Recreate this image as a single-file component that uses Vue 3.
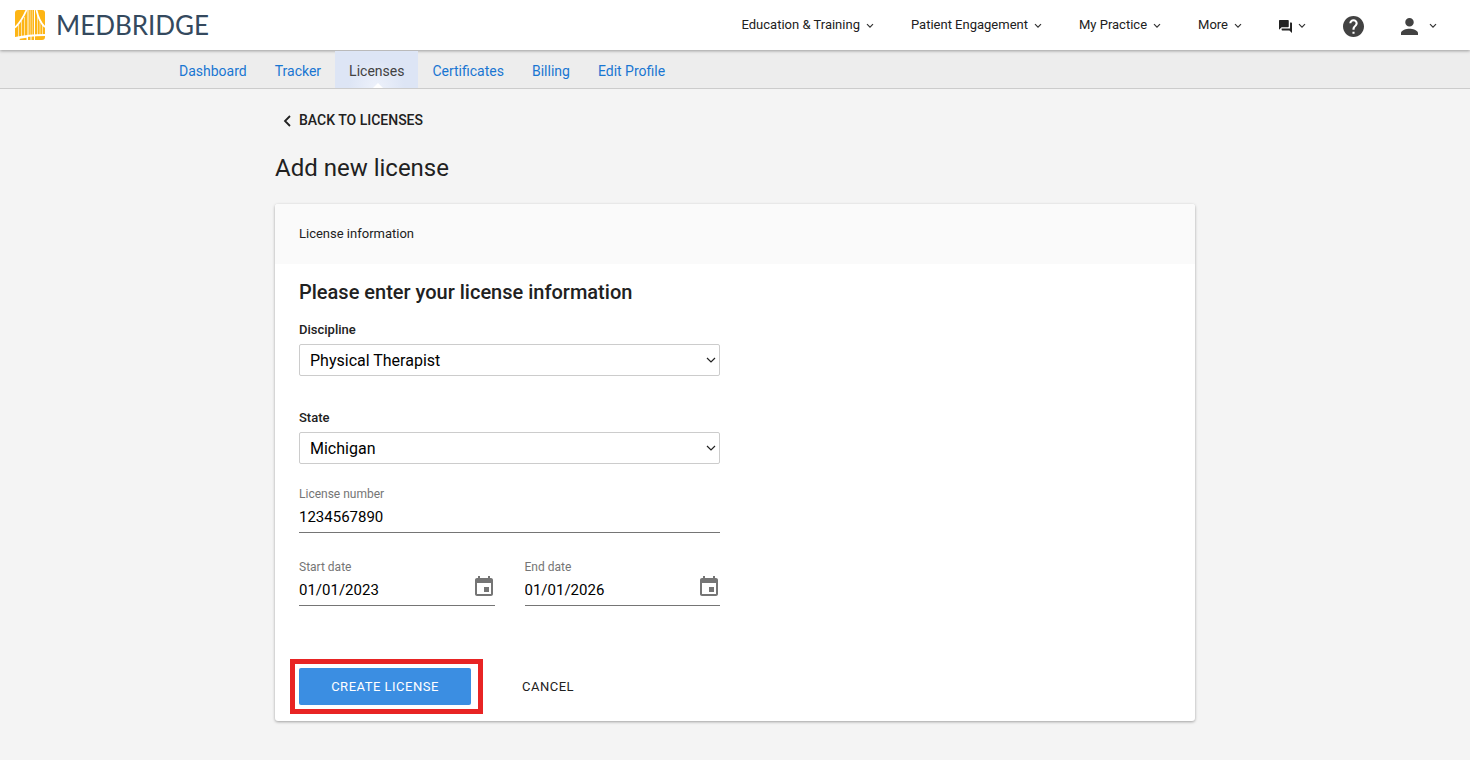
<script setup>
import { ref } from 'vue'

const menus = ['Education & Training', 'Patient Engagement', 'My Practice', 'More']
const tabs = ['Dashboard', 'Tracker', 'Licenses', 'Certificates', 'Billing', 'Edit Profile']
const activeTab = ref('Licenses')
const discipline = ref('Physical Therapist')
const state = ref('Michigan')
const licenseNumber = ref('1234567890')
const dates = ref([
  { id: 'start-date', label: 'Start date', value: '01/01/2023' },
  { id: 'end-date', label: 'End date', value: '01/01/2026' },
])
</script>

<template>
  <div class="page">
    <header class="topbar">
      <a class="brand" href="#" aria-label="Medbridge home">
        <svg class="brand-mark" viewBox="0 0 30 30" aria-hidden="true">
          <rect width="30" height="30" rx="3" fill="#fdb515" />
          <g fill="none" stroke="#fff">
            <path d="M0 17.500C5 13 8 8 11.500 0" stroke-width="1.800" />
            <path d="M21.500 0C23 7 25.500 13 30 17" stroke-width="1.800" />
            <path d="M13 0V26M19.500 0V25" stroke-width="1" />
            <path d="M15.200 0V26M17.300 0V26" stroke-width=".5" />
            <path d="M3.500 15V27M6.500 11V27M9.500 7V26M22.500 5V25M25 12V25M27.500 15V25" stroke-width=".6" />
            <path d="M0 28C9 26 19 25 30 25" stroke-width="1.800" />
            <path d="M16 26V30M19.500 26V30" stroke-width="1" />
          </g>
          <path d="M0 30V28L13 26.300V30Z" fill="#fff" />
          <path d="M4.500 30L5 28.800L11.500 27.800V30Z" fill="#fdb515" />
        </svg>
        <span class="brand-name">MEDBRIDGE</span>
      </a>
      <nav class="menus" aria-label="Main">
        <button v-for="m in menus" :key="m" class="menu" type="button">
          {{ m }}
          <svg class="caret" viewBox="0 0 8 6" aria-hidden="true"><path d="M1 1.200L4 4.200L7 1.200" /></svg>
        </button>
        <button class="menu" type="button" aria-label="Messages">
          <svg class="chat" viewBox="2 2 20 20" aria-hidden="true"><path d="M21 6h-2v9H6v2c0 .55.45 1 1 1h11l4 4V7c0-.55-.45-1-1-1zm-4 6V3c0-.55-.45-1-1-1H3c-.55 0-1 .45-1 1v14l4-4h10c.55 0 1-.45 1-1z" /></svg>
          <svg class="caret" viewBox="0 0 8 6" aria-hidden="true"><path d="M1 1.200L4 4.200L7 1.200" /></svg>
        </button>
        <button class="menu" type="button" aria-label="Help">
          <svg class="help" viewBox="2 2 20 20" aria-hidden="true"><path d="M12 2C6.480 2 2 6.480 2 12s4.480 10 10 10 10-4.480 10-10S17.520 2 12 2zm1 17h-2v-2h2v2zm2.070-7.750l-.9.920C13.450 12.900 13 13.500 13 15h-2v-.5c0-1.100.45-2.100 1.170-2.830l1.240-1.260c.37-.36.59-.86.59-1.410 0-1.100-.9-2-2-2s-2 .9-2 2H8c0-2.210 1.790-4 4-4s4 1.790 4 4c0 .88-.36 1.680-.93 2.250z" /></svg>
        </button>
        <button class="menu account" type="button" aria-label="Account">
          <svg class="person" viewBox="4 4 16 16" aria-hidden="true"><path d="M12 12c2.210 0 4-1.790 4-4s-1.790-4-4-4-4 1.790-4 4 1.790 4 4 4zm0 2c-2.670 0-8 1.340-8 4v2h16v-2c0-2.660-5.330-4-8-4z" /></svg>
          <svg class="caret" viewBox="0 0 8 6" aria-hidden="true"><path d="M1 1.200L4 4.200L7 1.200" /></svg>
        </button>
      </nav>
    </header>

    <nav class="tabs" aria-label="Account sections">
      <a
        v-for="t in tabs"
        :key="t"
        href="#"
        class="tab"
        :class="{ active: t === activeTab }"
        @click.prevent="activeTab = t"
      >{{ t }}</a>
    </nav>

    <main class="content">
      <a class="back" href="#">
        <svg class="back-icon" viewBox="0 0 8 12" aria-hidden="true"><path d="M7 1L2 6L7 11" /></svg>
        BACK TO LICENSES
      </a>
      <h1 class="title">Add new license</h1>

      <section class="card">
        <header class="card-head">License information</header>
        <form class="form" @submit.prevent>
          <h2 class="form-title">Please enter your license information</h2>

          <div class="choice">
            <label class="choice-label" for="discipline">Discipline</label>
            <div class="select-box">
              <select id="discipline" v-model="discipline" class="select">
                <option>Physical Therapist</option>
              </select>
              <svg class="select-caret" viewBox="0 0 10 6" aria-hidden="true"><path d="M1 1L5 5L9 1" /></svg>
            </div>
          </div>

          <div class="choice">
            <label class="choice-label" for="state">State</label>
            <div class="select-box">
              <select id="state" v-model="state" class="select">
                <option>Michigan</option>
              </select>
              <svg class="select-caret" viewBox="0 0 10 6" aria-hidden="true"><path d="M1 1L5 5L9 1" /></svg>
            </div>
          </div>

          <div class="field">
            <label class="field-label" for="license-number">License number</label>
            <div class="field-line">
              <input id="license-number" v-model="licenseNumber" class="input" type="text" />
            </div>
          </div>

          <div class="dates">
            <div v-for="d in dates" :key="d.id" class="field">
              <label class="field-label" :for="d.id">{{ d.label }}</label>
              <div class="field-line">
                <input :id="d.id" v-model="d.value" class="input" type="text" />
                <button class="picker" type="button" :aria-label="'Open calendar for ' + d.label">
                  <svg class="calendar" viewBox="3 1 18 20" aria-hidden="true"><path d="M17 12h-5v5h5v-5zM16 1v2H8V1H6v2H5c-1.110 0-2 .9-2 2v14c0 1.100.89 2 2 2h14c1.100 0 2-.9 2-2V5c0-1.100-.9-2-2-2h-1V1h-2zm3 18H5V8h14v11z" /></svg>
                </button>
              </div>
            </div>
          </div>

          <div class="actions">
            <div class="highlight">
              <button class="create" type="submit">CREATE LICENSE</button>
            </div>
            <button class="cancel" type="button">CANCEL</button>
          </div>
        </form>
      </section>
    </main>
  </div>
</template>

<style>
body {
  margin: 0;
  background: #f4f4f4;
}
</style>

<style scoped>
.page {
  font-family: Roboto, "Liberation Sans", sans-serif;
  color: #212121;
}
.page * {
  box-sizing: border-box;
}
button {
  font: inherit;
  color: inherit;
  background: none;
  border: 0;
  padding: 0;
  cursor: pointer;
}
a {
  text-decoration: none;
}
.topbar {
  position: relative;
  display: flex;
  justify-content: space-between;
  align-items: center;
  height: 50px;
  padding: 0 33px 0 15px;
  background: #fff;
  box-shadow: 0 1px 3px rgba(0, 0, 0, 0.35);
}
.brand {
  display: flex;
  align-items: center;
  gap: 11px;
  color: #34495e;
}
.brand-mark {
  width: 30px;
  height: 30px;
}
.brand-name {
  font-family: Lato, sans-serif;
  font-size: 26px;
  line-height: 30px;
}
.menus {
  display: flex;
  align-items: center;
  gap: 37px;
}
.menu {
  display: flex;
  align-items: center;
  gap: 6px;
  font-size: 13px;
  line-height: 20px;
}
.account {
  gap: 11px;
}
.caret {
  width: 8px;
  height: 6px;
  margin-top: 2px;
  fill: none;
  stroke: #333;
  stroke-width: 1.2;
}
.chat {
  width: 13px;
  height: 13px;
  margin-top: 2px;
  fill: #212121;
}
.help {
  width: 21px;
  height: 21px;
  margin-top: 2px;
  fill: #424242;
}
.person {
  width: 17px;
  height: 17px;
  margin-top: 2px;
  fill: #424242;
}
.tabs {
  display: flex;
  height: 39px;
  padding: 1px 165px 0;
  background: #ededed;
  border-bottom: 1px solid #ccc;
}
.tab {
  position: relative;
  padding: 1px 14px 0;
  font-size: 14px;
  line-height: 38px;
  height: 37px;
  color: #1976d2;
}
.tab.active {
  color: #424242;
  background: radial-gradient(circle at 50% 100%, #eef2fb 0, #dde5f5 28px);
}
.tab.active::after {
  content: "";
  position: absolute;
  left: 50%;
  bottom: 0;
  margin-left: -4px;
  border: 5px solid transparent;
  border-top: 0;
  border-bottom-color: #fff;
}
.content {
  max-width: 920px;
  margin: 0 auto;
  padding: 21px 0 38px;
}
.back {
  display: inline-flex;
  align-items: center;
  gap: 8px;
  margin-left: 8px;
  font-size: 14px;
  line-height: 20px;
  font-weight: 500;
  color: #212121;
}
.back-icon {
  width: 8px;
  height: 12px;
  margin-top: 2px;
  fill: none;
  stroke: #212121;
  stroke-width: 1.8;
}
.title {
  margin: 21px 0 20px;
  font-size: 24px;
  line-height: 32px;
  font-weight: 400;
}
.card {
  background: #fff;
  border-radius: 3px;
  box-shadow: 0 1px 3px rgba(0, 0, 0, 0.35);
}
.card-head {
  padding: 20px 24px;
  font-size: 13px;
  line-height: 20px;
  background: #fafafa;
  border-radius: 3px 3px 0 0;
}
.form {
  padding: 14px 24px 7px;
}
.form-title {
  margin: 0 0 14px;
  font-size: 20px;
  line-height: 28px;
  font-weight: 500;
}
.choice,
.form > .field,
.dates {
  max-width: 421px;
}
.choice {
  margin-bottom: 32px;
}
.choice + .field {
  margin-top: -10px;
}
.choice-label {
  display: block;
  margin-bottom: 4px;
  font-size: 13px;
  line-height: 20px;
  font-weight: 500;
}
.select-box {
  position: relative;
}
.select {
  display: block;
  width: 100%;
  height: 32px;
  padding: 0 24px 0 10px;
  font: inherit;
  font-size: 16px;
  color: #000;
  background: #fff;
  border: 1px solid #ccc;
  border-radius: 2px;
  appearance: none;
}
.select-caret {
  position: absolute;
  right: 4px;
  top: 13px;
  width: 10px;
  height: 6px;
  fill: none;
  stroke: #222;
  stroke-width: 1.2;
  pointer-events: none;
}
.field {
  flex: 1;
  min-width: 0;
  margin-bottom: 26px;
}
.field-label {
  display: block;
  font-size: 12px;
  line-height: 16px;
  color: #757575;
}
.field-line {
  display: flex;
  align-items: center;
  height: 31px;
  border-bottom: 1px solid #757575;
}
.input {
  flex: 1;
  min-width: 0;
  height: 24px;
  padding: 0;
  font: inherit;
  font-size: 15px;
  color: #000;
  background: none;
  border: 0;
}
.picker {
  align-self: flex-start;
  width: 20px;
  height: 22px;
}
.calendar {
  display: block;
  width: 18px;
  height: 20px;
  margin-right: 2px;
  fill: #757575;
}
.dates {
  display: flex;
  gap: 30px;
}
.actions {
  display: flex;
  align-items: center;
  margin: 27px 0 0 -9px;
}
.highlight {
  padding: 4px 7px 4px 4px;
  border: 5px solid #e82424;
}
.create {
  display: block;
  width: 172px;
  height: 37px;
  font-size: 13px;
  letter-spacing: 0.5px;
  color: #fff;
  background: #3b8ee2;
  border-radius: 2px;
}
.cancel {
  margin-left: 39px;
  font-size: 13px;
  line-height: 20px;
  letter-spacing: 0.5px;
}
</style>
